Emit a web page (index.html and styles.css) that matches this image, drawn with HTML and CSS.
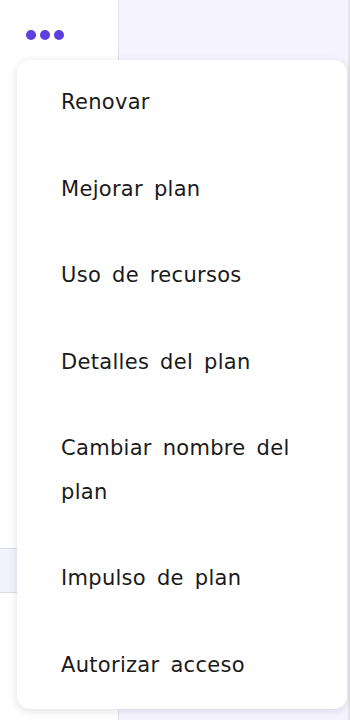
FILE: index.html
```html
<!DOCTYPE html>
<html lang="es">
<head>
<meta charset="utf-8">
<link rel="stylesheet" href="styles.css">
</head>
<body>
<div class="app">
  <aside class="sidebar">
    <div class="dots-row">
      <button class="dots" aria-label="Más opciones">
        <span></span><span></span><span></span>
      </button>
    </div>
    <div class="spacer"></div>
    <div class="row-highlight"></div>
  </aside>
  <main class="main"></main>
  <div class="edge"></div>
</div>
<ul class="menu">
  <li class="item">Renovar</li>
  <li class="item">Mejorar plan</li>
  <li class="item">Uso de recursos</li>
  <li class="item">Detalles del plan</li>
  <li class="item">Cambiar nombre del plan</li>
  <li class="item">Impulso de plan</li>
  <li class="item">Autorizar acceso</li>
</ul>
</body>
</html>
```
FILE: styles.css
```css
* { box-sizing: border-box; }
html, body { margin: 0; padding: 0; }
body {
  width: 350px;
  height: 720px;
  overflow: hidden;
  font-family: "Inter", "Noto Sans", sans-serif;
  background: #f5f4fe;
  position: relative;
}
.app {
  display: flex;
  height: 720px;
}
.sidebar {
  width: 119px;
  background: #ffffff;
  border-right: 1px solid #e2e1ea;
  display: flex;
  flex-direction: column;
}
.dots-row {
  height: 70px;
  padding: 30px 0 0 26px;
}
.dots {
  display: flex;
  gap: 4px;
  padding: 0;
  border: 0;
  background: none;
}
.dots span {
  width: 10px;
  height: 10px;
  border-radius: 50%;
  background: #5c3fdc;
}
.spacer { height: 478px; }
.row-highlight {
  height: 45px;
  background: #f2f2fd;
  border-top: 1px solid #dcdce4;
  border-bottom: 1px solid #dcdce4;
}
.main { flex: 1; }
.edge {
  width: 2px;
  background: #e4e4ea;
}
.menu {
  position: absolute;
  left: 17px;
  top: 60px;
  width: 330px;
  margin: 0;
  padding: 0;
  list-style: none;
  background: #ffffff;
  border-radius: 13px;
  box-shadow: 0 2px 8px rgba(40, 40, 80, 0.14);
}
.item {
  padding: 21px 20px 22px 44px;
  font-family: "DejaVu Sans", "Noto Sans", sans-serif;
  font-size: 21px;
  letter-spacing: 0.3px;
  word-spacing: 4px;
  line-height: 43.5px;
  color: #1a1a1a;
}
```
